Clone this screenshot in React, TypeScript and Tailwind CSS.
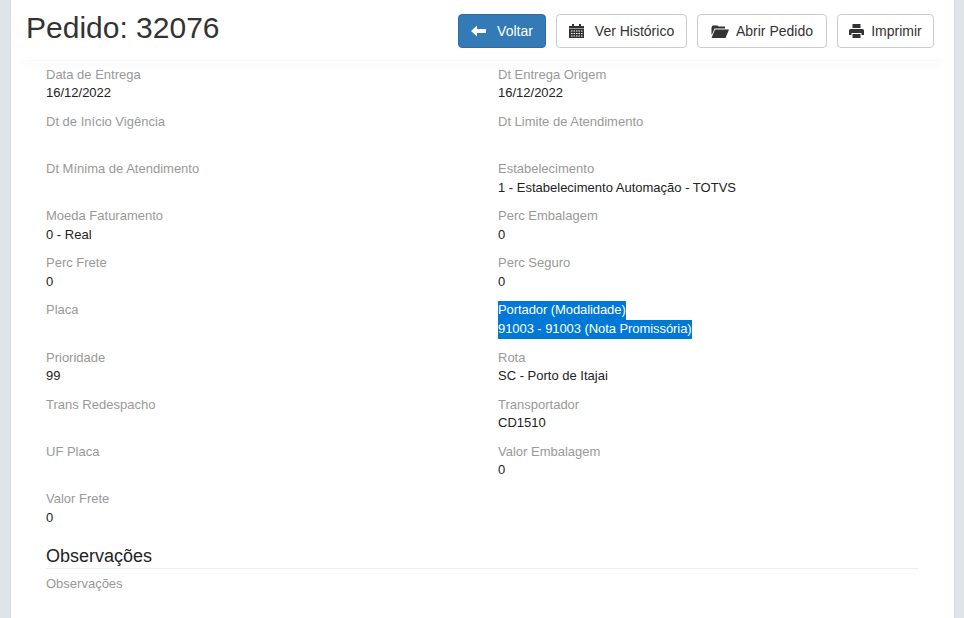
const campos: { label: string; valor?: string; selecionado?: boolean }[] = [
  { label: 'Data de Entrega', valor: '16/12/2022' },
  { label: 'Dt Entrega Origem', valor: '16/12/2022' },
  { label: 'Dt de Início Vigência' },
  { label: 'Dt Limite de Atendimento' },
  { label: 'Dt Mínima de Atendimento' },
  { label: 'Estabelecimento', valor: '1 - Estabelecimento Automação - TOTVS' },
  { label: 'Moeda Faturamento', valor: '0 - Real' },
  { label: 'Perc Embalagem', valor: '0' },
  { label: 'Perc Frete', valor: '0' },
  { label: 'Perc Seguro', valor: '0' },
  { label: 'Placa' },
  { label: 'Portador (Modalidade)', valor: '91003 - 91003 (Nota Promissória)', selecionado: true },
  { label: 'Prioridade', valor: '99' },
  { label: 'Rota', valor: 'SC - Porto de Itajai' },
  { label: 'Trans Redespacho' },
  { label: 'Transportador', valor: 'CD1510' },
  { label: 'UF Placa' },
  { label: 'Valor Embalagem', valor: '0' },
  { label: 'Valor Frete', valor: '0' },
];

const Campo = ({ label, valor, selecionado }: { label: string; valor?: string; selecionado?: boolean }) => (
  <div className="mb-[10px] min-h-[37.14px] leading-[18.57px]">
    <div>
      <span className={selecionado ? 'inline-block bg-[#0078d7] tracking-[-0.08px] text-white' : 'text-[#999]'}>{label}</span>
    </div>
    <div>
      <span className={selecionado ? 'inline-block bg-[#0078d7] tracking-[-0.07px] text-white' : 'text-[#222]'}>{valor}</span>
    </div>
  </div>
);

const Botao = ({ icon, children, className }: { icon: React.ReactNode; children: React.ReactNode; className: string }) => (
  <button className={`flex h-[34px] items-center justify-center rounded border text-sm ${className}`}>
    {icon}
    {children}
  </button>
);

const IconeVoltar = () => (
  <svg viewBox="0 0 15 12" className="h-[12px] w-[15px]" fill="currentColor">
    <path d="M0 6 6 0.5V4H15V8H6V11.5Z" />
  </svg>
);

const IconeCalendario = () => (
  <svg viewBox="0 0 15 14" className="h-[14px] w-[15px]" fill="#333">
    <path d="M3 0H5V2H10V0H12V2H15V4.5H0V2H3Z" />
    <path
      fillRule="evenodd"
      d="M0 5H15V14H0ZM2 6.5V7.5H3.5V6.5ZM4.5 6.5V7.5H6V6.5ZM7 6.5V7.5H8.5V6.5ZM9.5 6.5V7.5H11V6.5ZM12 6.5V7.5H13.5V6.5ZM2 9V10H3.5V9ZM4.5 9V10H6V9ZM7 9V10H8.5V9ZM9.5 9V10H11V9ZM12 9V10H13.5V9ZM2 11.5V12.5H3.5V11.5ZM4.5 11.5V12.5H6V11.5ZM7 11.5V12.5H8.5V11.5ZM9.5 11.5V12.5H11V11.5ZM12 11.5V12.5H13.5V11.5Z"
    />
  </svg>
);

const IconePasta = () => (
  <svg viewBox="0 0 18 13" className="h-[13px] w-[18px]" fill="#333">
    <path d="M0.5 2.5 1.5 0.5H6.5L7.5 1.5H14V3.5H3.5L1 9.5H0.5Z" />
    <path d="M4 4.5H18L14.5 13H0.5Z" />
  </svg>
);

const IconeImpressora = () => (
  <svg viewBox="0 0 15 14" className="h-[14px] w-[15px]" fill="#333">
    <path d="M3.5 0H11.5V4H3.5Z" />
    <path
      fillRule="evenodd"
      d="M1.5 5H13.5Q15 5 15 6.5V11H12.5V9H2.5V11H0V6.5Q0 5 1.5 5Z"
    />
    <path d="M3.5 10H11.5V14H3.5Z" />
  </svg>
);

export default function App() {
  return (
    <div className="h-screen overflow-hidden bg-[#dfe4e8] pl-[10px] pr-[9px] font-['Liberation_Sans',Arial,sans-serif] text-[13px]">
      <div className="h-full border-x border-[#d5d9dd] bg-white">
        <div className="flex h-[62px] items-start justify-between pl-[15px] pr-[20px]">
          <h1 className="mt-[9px] text-[30px] leading-[38px] text-[#333]">Pedido: 32076</h1>
          <div className="mt-[14px] flex gap-[10px]">
            <Botao className="w-[88px] gap-[11px] border-[#2e6da4] bg-[#337ab7] text-white" icon={<IconeVoltar />}>
              Voltar
            </Botao>
            <Botao className="w-[131px] gap-[11px] border-[#ccc] bg-white text-[#333]" icon={<IconeCalendario />}>
              Ver Histórico
            </Botao>
            <Botao className="w-[130px] gap-[7px] border-[#ccc] bg-white text-[#333]" icon={<IconePasta />}>
              Abrir Pedido
            </Botao>
            <Botao className="w-[97px] gap-[7px] border-[#ccc] bg-white text-[#333]" icon={<IconeImpressora />}>
              Imprimir
            </Botao>
          </div>
        </div>
        {/* faixa de sombra abaixo do cabeçalho */}
        <div className="mx-[14px] h-px bg-white shadow-[0_0_7px_2px_rgba(0,0,0,0.035)]" />

        <div className="pl-[35px] pr-[35px] pt-[2.85px]">
          <div className="grid w-[904px] grid-cols-2">
            {campos.map((c) => (
              <Campo key={c.label} label={c.label} valor={c.valor} selecionado={c.selecionado} />
            ))}
          </div>
          <h2 className="mt-[8px] border-b border-[#eee] pb-[1px] text-lg leading-[22px] text-[#222]">Observações</h2>
          <div className="mt-[6px] leading-[18.57px] text-[#999]">Observações</div>
        </div>
      </div>
    </div>
  );
}
